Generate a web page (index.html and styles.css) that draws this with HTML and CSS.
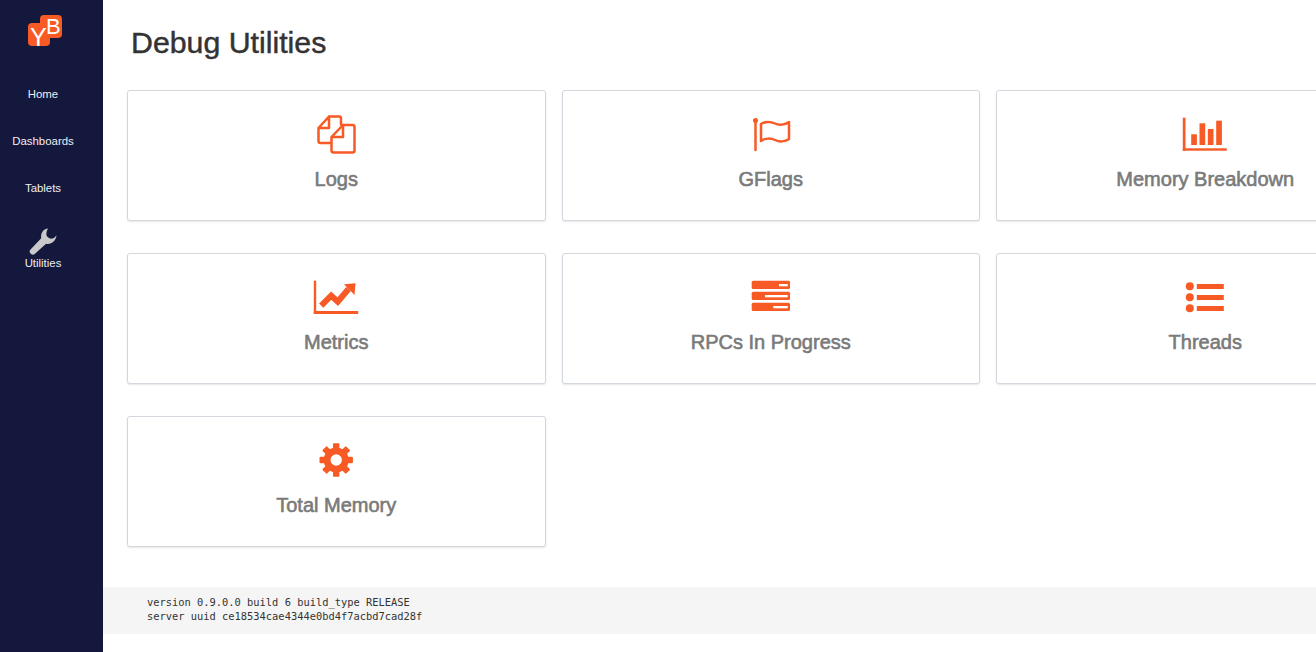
FILE: index.html
```html
<!DOCTYPE html>
<html lang="en">
<head>
<meta charset="utf-8">
<title>Debug Utilities</title>
<link rel="stylesheet" href="styles.css">
</head>
<body>
<div class="app">
  <nav class="sidebar">
    <div class="logo-wrap">
      <svg class="logo" width="36" height="44" viewBox="0 0 36 44">
        <rect class="logo-bg" x="13" y="1" width="22" height="23" rx="4"/>
        <rect class="logo-bg" x="1" y="9" width="22" height="23" rx="4"/>
        <text class="logo-y" x="3" y="32">Y</text>
        <text class="logo-b" x="19" y="20">B</text>
      </svg>
    </div>
    <a class="nav-item">Home</a>
    <a class="nav-item">Dashboards</a>
    <a class="nav-item">Tablets</a>
    <a class="nav-item nav-item-icon">
      <svg class="wrench" width="28" height="28" viewBox="0 0 28 28">
        <path class="wrench-shape" d="M19 0.500 C14.500 1 11.500 5 12.200 10.200 L1.800 21.200 A3 3 0 0 0 6 25.800 L17 15.800 C22 17 27 13 27.500 7.500 Q25 11 22 10.700 Q17.500 9.500 17.300 6.300 Q17.300 3 19 0.500 Z"/>
      </svg>
      <span>Utilities</span>
    </a>
  </nav>
  <main class="main">
    <h1 class="title">Debug Utilities</h1>
    <section class="cards">
      <a class="card">
        <svg class="icon" viewBox="0 0 48 44">
          <path class="line" d="M17 4.5 H27 a2 2 0 0 1 2 2 V12.5 M19 31 H8.500 a2 2 0 0 1 -2 -2 V16 L17 4.500 V16 H6.500"/>
          <path class="line" d="M31 13 H40.500 a2 2 0 0 1 2 2 V38.500 a2 2 0 0 1 -2 2 H21.500 a2 2 0 0 1 -2 -2 V25 L31 13 V25 H19.500"/>
        </svg>
        <span class="label">Logs</span>
      </a>
      <a class="card">
        <svg class="icon" viewBox="0 0 48 44">
          <circle class="fill" cx="8.500" cy="8.500" r="2.500"/>
          <path class="line" d="M8.500 9 V38"/>
          <path class="line" d="M14 12 C18 9 24 9.500 28 11.500 S38 13 42 10 V27 C38 30 32 30 28 28 S18 26 14 29 Z"/>
        </svg>
        <span class="label">GFlags</span>
      </a>
      <a class="card">
        <svg class="icon" viewBox="0 0 48 44">
          <rect class="fill" x="1.800" y="5.700" width="2.700" height="33"/>
          <rect class="fill" x="1.800" y="36.300" width="44" height="2.400"/>
          <rect class="fill" x="10.200" y="22.300" width="5.700" height="10.700"/>
          <rect class="fill" x="18.500" y="11.300" width="5.700" height="21.700"/>
          <rect class="fill" x="26.800" y="17" width="5.700" height="16"/>
          <rect class="fill" x="35.200" y="8.700" width="5.700" height="24.300"/>
        </svg>
        <span class="label">Memory Breakdown</span>
      </a>
      <a class="card">
        <svg class="icon" viewBox="0 0 48 44">
          <rect class="fill" x="1.800" y="5.700" width="2.400" height="33.300"/>
          <rect class="fill" x="1.800" y="36" width="44.400" height="3"/>
          <path class="trend" d="M9.200 30.700 L19.200 20.700 L25.800 26.700 L36.500 14"/>
          <path class="fill" d="M32 9.300 L43.500 8.300 L42.500 20 Z"/>
        </svg>
        <span class="label">Metrics</span>
      </a>
      <a class="card">
        <svg class="icon" viewBox="0 0 48 44">
          <rect class="fill" x="4.700" y="5.700" width="38.300" height="8.300" rx="1.500"/>
          <rect class="fill" x="4.700" y="16.700" width="38.300" height="8.300" rx="1.500"/>
          <rect class="fill" x="4.700" y="27.700" width="38.300" height="8.300" rx="1.500"/>
          <rect class="slot" x="32" y="9" width="8.700" height="2.300"/>
          <rect class="slot" x="18" y="20" width="22.700" height="2.300"/>
          <rect class="slot" x="26.300" y="31" width="14.400" height="2.300"/>
        </svg>
        <span class="label">RPCs In Progress</span>
      </a>
      <a class="card">
        <svg class="icon" viewBox="0 0 48 44">
          <circle class="fill" cx="8.800" cy="11.300" r="4"/>
          <circle class="fill" cx="8.800" cy="22.300" r="4"/>
          <circle class="fill" cx="8.800" cy="33.300" r="4"/>
          <rect class="fill" x="15.800" y="9" width="27" height="5"/>
          <rect class="fill" x="15.800" y="20" width="27" height="5"/>
          <rect class="fill" x="15.800" y="31" width="27" height="5"/>
        </svg>
        <span class="label">Threads</span>
      </a>
      <a class="card">
        <svg class="icon" viewBox="0 0 48 44">
          <circle class="fill" cx="24.200" cy="22" r="12.500"/>
          <g transform="translate(24.200 22)">
            <rect class="fill" x="-3.200" y="-16.700" width="6.400" height="33.400" rx="1"/>
            <rect class="fill" x="-3.200" y="-16.700" width="6.400" height="33.400" rx="1" transform="rotate(45)"/>
            <rect class="fill" x="-3.200" y="-16.700" width="6.400" height="33.400" rx="1" transform="rotate(90)"/>
            <rect class="fill" x="-3.200" y="-16.700" width="6.400" height="33.400" rx="1" transform="rotate(135)"/>
          </g>
          <circle class="slot" cx="24.200" cy="22" r="5.700"/>
        </svg>
        <span class="label">Total Memory</span>
      </a>
    </section>
    <footer class="footer">
      <div>version 0.9.0.0 build 6 build_type RELEASE</div>
      <div>server uuid ce18534cae4344e0bd4f7acbd7cad28f</div>
    </footer>
  </main>
</div>
</body>
</html>
```
FILE: styles.css
```css
* { box-sizing: border-box; }
html, body { margin: 0; height: 100%; overflow: hidden; background: #fff; }
body { font-family: "Liberation Sans", Arial, sans-serif; color: #333; }
.app { display: flex; width: 1316px; height: 652px; overflow: hidden; }

.sidebar {
  flex: 0 0 103px;
  height: 652px;
  padding-right: 17px;
  background: #14183c;
  color: #eeeef2;
  font-size: 11.4px;
  text-align: center;
}
.logo-wrap { height: 70.5px; padding: 14px 0 0 27px; text-align: left; }
.logo { display: block; }
.logo-bg { fill: #f75a24; }
.logo-y { font: 25px "Liberation Sans", Arial, sans-serif; fill: #fff; }
.logo-b { font: 22px "Liberation Sans", Arial, sans-serif; fill: #fff; }

.nav-item {
  display: flex;
  align-items: center;
  justify-content: center;
  height: 47px;
  line-height: 14px;
}
.nav-item-icon { flex-direction: column; justify-content: flex-start; height: auto; padding-top: 16px; }
.wrench { display: block; }
.wrench-shape { fill: #c9c9cc; }

.main { flex: 1 0 auto; width: 1213px; min-width: 0; }
.title {
  height: 90px;
  margin: 0;
  padding: 26px 0 0 28px;
  font-size: 30.3px;
  line-height: 34px;
  font-weight: 400;
  color: #333;
  -webkit-text-stroke: 0.45px #333;
}
.cards {
  display: grid;
  grid-template-columns: repeat(3, 418.5px);
  grid-auto-rows: 131px;
  gap: 32px 16px;
  padding-left: 24px;
}
.card {
  display: flex;
  flex-direction: column;
  align-items: center;
  padding-top: 21px;
  background: #fff;
  border: 1px solid #d3d8df;
  border-radius: 3px;
  box-shadow: 0 1px 2px rgba(0, 0, 0, 0.1);
}
.icon { display: block; width: 48px; height: 44px; flex: none; }
.fill { fill: #f75a24; }
.slot { fill: #fff; }
.line { fill: none; stroke: #f75a24; stroke-width: 2.5; stroke-linejoin: round; stroke-linecap: round; }
.trend { fill: none; stroke: #f75a24; stroke-width: 6; }
.label {
  margin-top: 11px;
  font-size: 20px;
  line-height: 24px;
  font-weight: 400;
  color: #7a7a7a;
  -webkit-text-stroke: 0.6px #7a7a7a;
}
.footer {
  margin-top: 40px;
  height: 47px;
  padding: 8px 0 0 44px;
  background: #f5f5f5;
  font-family: "DejaVu Sans Mono", "Liberation Mono", monospace;
  font-size: 10.4px;
  line-height: 14px;
  color: #333;
}
```
